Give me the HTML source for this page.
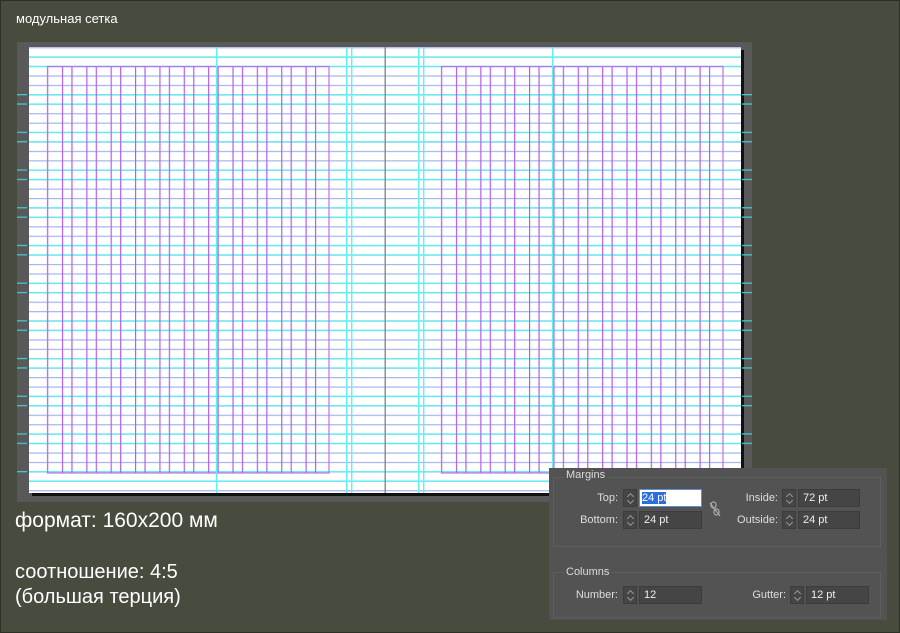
<!DOCTYPE html>
<html><head><meta charset="utf-8"><style>
*{margin:0;padding:0;box-sizing:border-box}
body{width:900px;height:633px;background:#484c3e;position:relative;overflow:hidden;font-family:"Liberation Sans","DejaVu Sans",sans-serif;color:#fff}
.abs{position:absolute}
.lbl{font-size:11px;color:#ddd;text-align:right}
.fld{height:18px;background:#454545;border:1px solid #3c3c3c;font-size:11px;color:#eee;padding:2px 0 0 4px}
.sp{width:14px;height:18px;background:#454545;border:1px solid #3c3c3c}
.sp:before,.sp:after{content:"";position:absolute;left:4px;width:4px;height:4px;border-left:1px solid #999;border-top:1px solid #999}
.sp:before{top:4px;transform:rotate(45deg)}
.sp:after{top:8px;transform:rotate(225deg)}
</style></head><body>
<svg class="abs" style="left:0;top:0" width="900" height="633" viewBox="0 0 900 633">
<defs>
<pattern id="bl" patternUnits="userSpaceOnUse" x="0" y="56.6" width="900" height="9.425"><rect x="0" y="0" width="900" height="1.2" fill="#a3b5ec"/></pattern>
<pattern id="cy" patternUnits="userSpaceOnUse" x="0" y="94" width="900" height="37.7"><rect x="0" y="0" width="900" height="1.3" fill="#5ff0f0"/><rect x="0" y="9.4" width="900" height="1.3" fill="#5ff0f0"/></pattern>
<pattern id="cl" patternUnits="userSpaceOnUse" x="47" y="0" width="24.36" height="633"><rect x="0" y="0" width="1.2" height="633" fill="#b060e8"/><rect x="14.9" y="0" width="1.2" height="633" fill="#b060e8"/></pattern>
<pattern id="cr" patternUnits="userSpaceOnUse" x="441" y="0" width="24.36" height="633"><rect x="0" y="0" width="1.2" height="633" fill="#b060e8"/><rect x="14.9" y="0" width="1.2" height="633" fill="#b060e8"/></pattern>
<pattern id="tk" patternUnits="userSpaceOnUse" x="0" y="94" width="900" height="37.7"><rect x="0" y="0" width="900" height="1.3" fill="#45c8c8"/><rect x="0" y="9.4" width="900" height="1.3" fill="#45c8c8"/></pattern>
</defs>
<rect x="0.5" y="0.5" width="899" height="632" fill="none" stroke="#2c2f26"/>
<rect x="17" y="42" width="735" height="460" fill="#595959"/>
<rect x="32" y="50" width="712" height="446" fill="#111"/>
<rect x="29" y="47" width="712" height="446" fill="#fff"/>
<rect x="29" y="47" width="712" height="446" fill="url(#bl)"/>
<rect x="29" y="47" width="712" height="446" fill="url(#cy)"/>
<rect x="17" y="94" width="10" height="380" fill="url(#tk)"/>
<rect x="742" y="94" width="10" height="380" fill="url(#tk)"/>
<rect x="47" y="66" width="282" height="407" fill="url(#cl)"/>
<rect x="441" y="66" width="282" height="407" fill="url(#cr)"/>
<rect x="47.5" y="66.5" width="281.5" height="406.5" fill="none" stroke="#c070e8" stroke-width="1.2"/>
<rect x="441.5" y="66.5" width="281.5" height="406.5" fill="none" stroke="#c070e8" stroke-width="1.2"/>
<g fill="#5ff0f0">
<rect x="216" y="47" width="1.4" height="446"/>
<rect x="346" y="47" width="1.4" height="446"/>
<rect x="351" y="47" width="1.4" height="446"/>
<rect x="418" y="47" width="1.4" height="446"/>
<rect x="423" y="47" width="1.4" height="446"/>
<rect x="552" y="47" width="1.4" height="446"/>
</g>
<rect x="384.5" y="47" width="1.4" height="446" fill="#888"/>
</svg>
<div class="abs" style="left:16px;top:11px;font-size:13px">модульная сетка</div>
<div class="abs" style="left:15px;top:509px;font-size:21px">формат: 160x200 мм</div>
<div class="abs" style="left:15px;top:560px;font-size:20px;line-height:25px">соотношение: 4:5<br>(большая терция)</div>

<div class="abs" style="left:549px;top:468px;width:338px;height:152px;background:#535353"></div>
<div class="abs" style="left:553px;top:477px;width:328px;height:70px;border:1px solid #5e5e5e"></div>
<div class="abs" style="left:553px;top:572px;width:328px;height:46px;border:1px solid #5e5e5e"></div>
<div class="abs" style="left:564px;top:469px;font-size:11px;color:#ddd;background:#535353;padding:0 2px">Margins</div>
<div class="abs" style="left:564px;top:566px;font-size:11px;color:#ddd;background:#535353;padding:0 2px">Columns</div>
<div class="abs lbl" style="left:558px;top:492px;width:60px">Top:</div>
<div class="abs sp" style="left:623px;top:489px"></div>
<div class="abs" style="left:639px;top:489px;width:63px;height:18px;background:#fff;border:1px solid #5a8fd8;padding:2px 0 0 2px;font-size:11px"><span style="background:#2a6ee0;color:#fff">24 pt</span></div>
<div class="abs lbl" style="left:558px;top:514px;width:60px">Bottom:</div>
<div class="abs sp" style="left:623px;top:511px"></div>
<div class="abs fld" style="left:639px;top:511px;width:63px">24 pt</div>
<svg class="abs" style="left:709px;top:501px" width="12" height="16" viewBox="0 0 12 16"><g fill="none" stroke="#aaa" stroke-width="1.2"><rect x="2" y="1" width="5" height="6" rx="2.5"/><rect x="5" y="8" width="5" height="6" rx="2.5"/><path d="M1 2L11 15"/></g></svg>
<div class="abs lbl" style="left:718px;top:492px;width:60px">Inside:</div>
<div class="abs sp" style="left:782px;top:489px"></div>
<div class="abs fld" style="left:798px;top:489px;width:62px">72 pt</div>
<div class="abs lbl" style="left:718px;top:514px;width:60px">Outside:</div>
<div class="abs sp" style="left:782px;top:511px"></div>
<div class="abs fld" style="left:798px;top:511px;width:62px">24 pt</div>
<div class="abs lbl" style="left:558px;top:589px;width:60px">Number:</div>
<div class="abs sp" style="left:623px;top:586px"></div>
<div class="abs fld" style="left:639px;top:586px;width:63px">12</div>
<div class="abs lbl" style="left:726px;top:589px;width:60px">Gutter:</div>
<div class="abs sp" style="left:790px;top:586px"></div>
<div class="abs fld" style="left:806px;top:586px;width:63px">12 pt</div>
</body></html>
